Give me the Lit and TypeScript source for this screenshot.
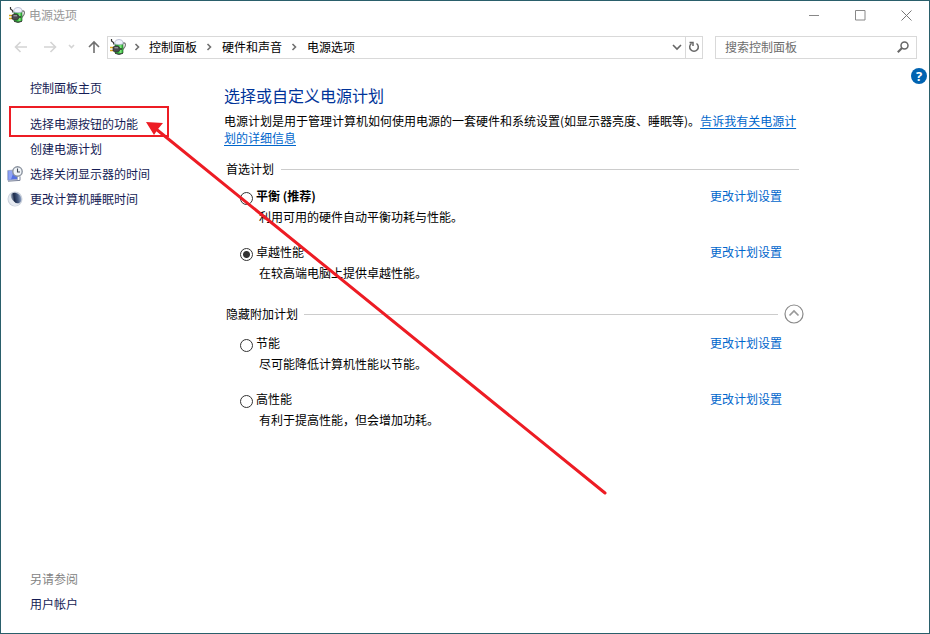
import { LitElement, html, css, svg, nothing } from "lit";
import { customElement, state } from "lit/decorators.js";
import { classMap } from "lit/directives/class-map.js";

interface Plan {
  id: string;
  name: string;
  note: string;
  recommended?: boolean;
}

const preferred: Plan[] = [
  { id: "balanced", name: "平衡 (推荐)", note: "利用可用的硬件自动平衡功耗与性能。", recommended: true },
  { id: "ultimate", name: "卓越性能", note: "在较高端电脑上提供卓越性能。" },
];

const additional: Plan[] = [
  { id: "saver", name: "节能", note: "尽可能降低计算机性能以节能。" },
  { id: "high", name: "高性能", note: "有利于提高性能，但会增加功耗。" },
];

const powerIcon = html`<svg width="16" height="16" viewBox="0 0 16 16" aria-hidden="true">
  <path d="M1.500 0v2l2 1.500.5 2" fill="none" stroke="#333" stroke-width="1.200" />
  <path d="M13 4c2.500-.5 2.800 1.500 2 3.500l-2 3" fill="none" stroke="#777" stroke-width="1.200" />
  <path d="M5 4v10q4 2.500 8 0V4z" fill="#35b53c" stroke="#2b6b30" stroke-width=".7" />
  <path d="M10.500 5.500v8.500" stroke="#7fe57c" stroke-width="2" />
  <path d="M4.800 5V3Q5.500.5 9 .5T13 3v2Q9 6.500 4.800 5z" fill="#f1f3fd" stroke="#a3a9c2" stroke-width=".7" />
  <path d="M5 14.300q4 2.200 8 0" fill="none" stroke="#444" />
  <path d="M0 8.500h3.500M0 11.500h3.500" stroke="#e0aa18" stroke-width="1.500" />
  <path d="M3 8 5.500 7h2Q10 8 10 10t-2.500 3h-2L3 12z" fill="#4a4a4e" stroke="#222" stroke-width=".6" />
  <path d="M4.500 8.800h3.500" stroke="#b0b0b4" />
  <path d="M10 10h2" stroke="#333" stroke-width="1.400" />
</svg>`;

const displayIcon = html`<svg width="16" height="16" viewBox="0 0 16 16" aria-hidden="true">
  <path d="M.8 4.500 10.500 4v9.500l-9.700.7z" fill="#5570e2" stroke="#a3adc8" />
  <path d="M1.500 5 7 4.700 4 13.500l-2.500.2z" fill="#8fa3f5" />
  <path d="M1 15.200l12-.8v-4" fill="none" stroke="#7a8298" />
  <circle cx="10.500" cy="5.500" r="4.700" fill="#f0f4f8" stroke="#8a929e" stroke-width="1.400" />
  <path d="M10.500 2.500V6H13" fill="none" stroke="#444c58" stroke-width="1.100" />
</svg>`;

const sleepIcon = html`<svg width="16" height="16" viewBox="0 0 16 16" aria-hidden="true">
  <defs>
    <linearGradient id="moon" x1=".9" y1=".1" x2=".2" y2=".8">
      <stop offset="0" stop-color="#9fb2d2" />
      <stop offset=".4" stop-color="#44597f" />
      <stop offset=".75" stop-color="#1c2b4a" />
      <stop offset="1" stop-color="#8f9db3" />
    </linearGradient>
  </defs>
  <circle cx="8" cy="8" r="7.500" fill="#ccd2dc" />
  <ellipse cx="9" cy="7" rx="6" ry="4.600" fill="url(#moon)" transform="rotate(45 9 7)" />
  <path d="M3.800 2.800Q-.5 7 3 12t9.500 1.500Q8 12.500 5.500 9T3.800 2.800" fill="#e6eaf0" />
</svg>`;

const chevron = (d: string, w = 10, h = 10, stroke = "#707070") =>
  html`<svg width=${w} height=${h} viewBox="0 0 ${w} ${h}" aria-hidden="true">
    ${svg`<path d=${d} fill="none" stroke=${stroke} stroke-width="1.600" />`}
  </svg>`;

@customElement("app-root")
export class AppRoot extends LitElement {
  static styles = css`
    :host {
      display: flex;
      flex-direction: column;
      box-sizing: border-box;
      min-height: 100vh;
      position: relative;
      overflow: hidden;
      border: 1px solid #2a5f6b;
      background: #fff;
      color: #000;
      font: 12px/16px "Noto Sans CJK SC", sans-serif;
    }
    svg { display: block; flex: none; }
    button {
      display: flex;
      align-items: center;
      justify-content: center;
      padding: 0;
      border: 0;
      background: none;
      font: inherit;
    }
    a { text-decoration: none; }
    .titlebar { display: flex; align-items: center; height: 28px; padding-left: 8px; }
    .title { flex: 1; margin: 0; padding-left: 4px; font-size: 12px; font-weight: 400; color: #999; }
    .caption { width: 46px; height: 28px; }
    .toolbar { display: flex; align-items: center; height: 36px; padding: 0 12px 0 8px; }
    .arrow { width: 24px; height: 22px; }
    .gap { margin-right: 6px; }
    .recent { width: 16px; height: 22px; margin-right: 3px; }
    .up { width: 24px; height: 22px; margin-right: 1px; }
    .address {
      flex: 1;
      display: flex;
      align-items: center;
      box-sizing: border-box;
      height: 23px;
      margin-right: 12px;
      padding-left: 2px;
      border: 1px solid #d9d9d9;
    }
    .crumbs { flex: 1; display: flex; align-items: center; margin: 0; padding: 0; list-style: none; }
    .crumbs li { display: flex; align-items: center; }
    .crumbs svg { margin: 0 7px 0 6px; }
    .crumbs li + li svg { margin: 0 8px 0 7px; }
    .crumbs a { color: #000; }
    .drop { width: 16px; height: 21px; }
    .refresh { width: 17px; height: 21px; border-left: 1px solid #d9d9d9; }
    .search {
      display: flex;
      align-items: center;
      box-sizing: border-box;
      width: 202px;
      height: 23px;
      padding: 0 7px 0 9px;
      border: 1px solid #d9d9d9;
    }
    .search input {
      flex: 1;
      min-width: 0;
      padding: 0;
      border: 0;
      outline: 0;
      background: none;
      font: inherit;
      color: #000;
    }
    .search input::placeholder { color: #6d6d6d; opacity: 1; }
    .body { flex: 1; display: flex; position: relative; }
    .side {
      flex: none;
      display: flex;
      flex-direction: column;
      box-sizing: border-box;
      width: 223px;
      padding: 10px 0 17px 6px;
    }
    .side a { display: flex; align-items: center; height: 25px; color: #151c55; }
    .icon { display: flex; width: 16px; margin-right: 7px; }
    .home { margin-bottom: 11px; }
    .also { margin: auto 0 0; padding-left: 23px; font-size: 12px; font-weight: 400; line-height: 25px; color: #838383; }
    .main { flex: 1; max-width: 582px; padding-top: 19px; }
    h1 { margin: 0; font-size: 16px; line-height: 22px; font-weight: 400; color: #003399; }
    .intro { max-width: 576px; margin: 6px 0 0; line-height: 17px; }
    .intro a { color: #0066cc; text-decoration: underline; text-underline-offset: 2px; }
    .group { display: flex; align-items: center; height: 20px; margin: 13px 0 7px; padding: 0 7px 0 2px; gap: 7px; }
    .group h2 { margin: 0; font-size: 12px; font-weight: 400; }
    .group::after { content: ""; order: 1; flex: 1; height: 1px; background: #ccc; }
    .group button { order: 2; width: 20px; height: 20px; }
    .folding { margin: 6px 0 9px; padding-right: 2px; gap: 6px; }
    .plan {
      display: grid;
      grid-template: 20px 22px / 19px 1fr 96px;
      align-items: center;
      box-sizing: border-box;
      height: 56px;
      padding-left: 13px;
    }
    .plan label { color: #000; }
    .strong { font-weight: 700; }
    .plan input {
      appearance: none;
      box-sizing: border-box;
      width: 13px;
      height: 13px;
      margin: 4px 0 0 3px;
      border: 1px solid #333;
      border-radius: 50%;
      background: #fff;
    }
    .plan input:checked { background: radial-gradient(circle, #333 0 3px, #fff 4px); }
    .plan a { color: #0066cc; }
    .note { grid-column: 2 / 4; margin: 0; padding-left: 3px; }
    .help {
      position: absolute;
      top: 3px;
      right: 2px;
      width: 16px;
      height: 16px;
      border-radius: 50%;
      background: #0063b1;
      color: #fff;
      font: 700 13px/16px "Open Sans", sans-serif;
    }
    .markup { position: absolute; top: 0; left: 0; pointer-events: none; }
  `;

  @state() private active = "ultimate";
  @state() private open = true;

  private plan(p: Plan) {
    return html`<div class="plan">
      <input type="radio" name="plan" id=${p.id} .checked=${this.active === p.id} @change=${() => (this.active = p.id)} />
      <label for=${p.id} class=${classMap({ strong: !!p.recommended })}>${p.name}</label>
      <a href="#edit">更改计划设置</a>
      <p class="note">${p.note}</p>
    </div>`;
  }

  render() {
    return html`
      <header class="titlebar">
        ${powerIcon}
        <p class="title">电源选项</p>
        <button class="caption" aria-label="最小化"><svg width="11" height="11"><path d="M0 5.500h10" stroke="#888" /></svg></button>
        <button class="caption" aria-label="最大化"><svg width="11" height="11"><path d="M.5.5h9.500v9.500H.5z" fill="none" stroke="#888" /></svg></button>
        <button class="caption" aria-label="关闭"><svg width="11" height="11"><path d="M.5.5l10 10M10.500.5l-10 10" stroke="#777" /></svg></button>
      </header>
      <div class="toolbar">
        <button class="arrow gap" aria-label="后退">${chevron("M13 6H1.500M6.500 1 1.500 6l5 5", 14, 12, "#d4d4d4")}</button>
        <button class="arrow" aria-label="前进">${chevron("M0 6h11.500M6.500 1l5 5-5 5", 14, 12, "#d4d4d4")}</button>
        <button class="recent" aria-label="最近浏览的位置">${chevron("M1 1l2.500 2.500L6 1", 7, 6, "#d4d4d4")}</button>
        <button class="up" aria-label="上移">${chevron("M6 13V2M1 7l5-5 5 5", 12, 14, "#707070")}</button>
        <nav class="address" aria-label="地址">
          ${powerIcon}
          <ol class="crumbs">
            ${["控制面板", "硬件和声音", "电源选项"].map(
              (t) => html`<li>${chevron("M3.500 2l3 3-3 3")}<a href="#path">${t}</a></li>`
            )}
          </ol>
          <button class="drop" aria-label="以前的位置">${chevron("M1 2l4 4 4-4", 10, 8, "#666")}</button>
          <button class="refresh" aria-label="刷新">
            <svg width="12" height="12" viewBox="0 0 12 12"><path d="M8.500 2.500A4.300 4.300 0 1 1 3.500 2.500M1.500 1.500h3.500v3.500" fill="none" stroke="#666" stroke-width="1.500" /></svg>
          </button>
        </nav>
        <div class="search">
          <input type="search" placeholder="搜索控制面板" aria-label="搜索控制面板" />
          <svg width="12" height="12" viewBox="0 0 12 12"><circle cx="7.500" cy="4.500" r="3.500" fill="none" stroke="#666" stroke-width="1.500" /><path d="M5 7 .8 11.200" stroke="#666" stroke-width="2" /></svg>
        </div>
      </div>
      <div class="body">
        <aside class="side">
          <a class="home" href="#home"><span class="icon"></span>控制面板主页</a>
          <a href="#buttons"><span class="icon"></span>选择电源按钮的功能</a>
          <a href="#create"><span class="icon"></span>创建电源计划</a>
          <a href="#display"><span class="icon">${displayIcon}</span>选择关闭显示器的时间</a>
          <a href="#sleep"><span class="icon">${sleepIcon}</span>更改计算机睡眠时间</a>
          <h2 class="also">另请参阅</h2>
          <a href="#accounts"><span class="icon"></span>用户帐户</a>
        </aside>
        <main class="main">
          <h1>选择或自定义电源计划</h1>
          <p class="intro">电源计划是用于管理计算机如何使用电源的一套硬件和系统设置(如显示器亮度、睡眠等)。<a href="#learn">告诉我有关电源计划的详细信息</a></p>
          <div class="group"><h2>首选计划</h2></div>
          ${preferred.map((p) => this.plan(p))}
          <div class="group folding">
            <h2>隐藏附加计划</h2>
            <button aria-label="隐藏附加计划" aria-expanded=${this.open} @click=${() => (this.open = !this.open)}>
              <svg width="20" height="20" viewBox="0 0 20 20"><circle cx="10" cy="10" r="9" fill="none" stroke="#8a8a8a" stroke-width="1.200" /><path d="M5.500 11.500 10 7l4.500 4.500" fill="none" stroke="#999" stroke-width="1.700" /></svg>
            </button>
          </div>
          ${this.open ? additional.map((p) => this.plan(p)) : nothing}
        </main>
        <button class="help" aria-label="帮助">?</button>
      </div>
      <svg class="markup" width="620" height="510" viewBox="1 1 620 510" aria-hidden="true">
        <rect x="10" y="107" width="158" height="29" fill="none" stroke="#ed1c24" stroke-width="2" />
        <path d="M156 129 605 493" stroke="#ed1c24" stroke-width="3" stroke-linecap="round" />
        <path d="M146 122 163 123 158 129 154 135z" fill="#ed1c24" />
      </svg>
    `;
  }
}
